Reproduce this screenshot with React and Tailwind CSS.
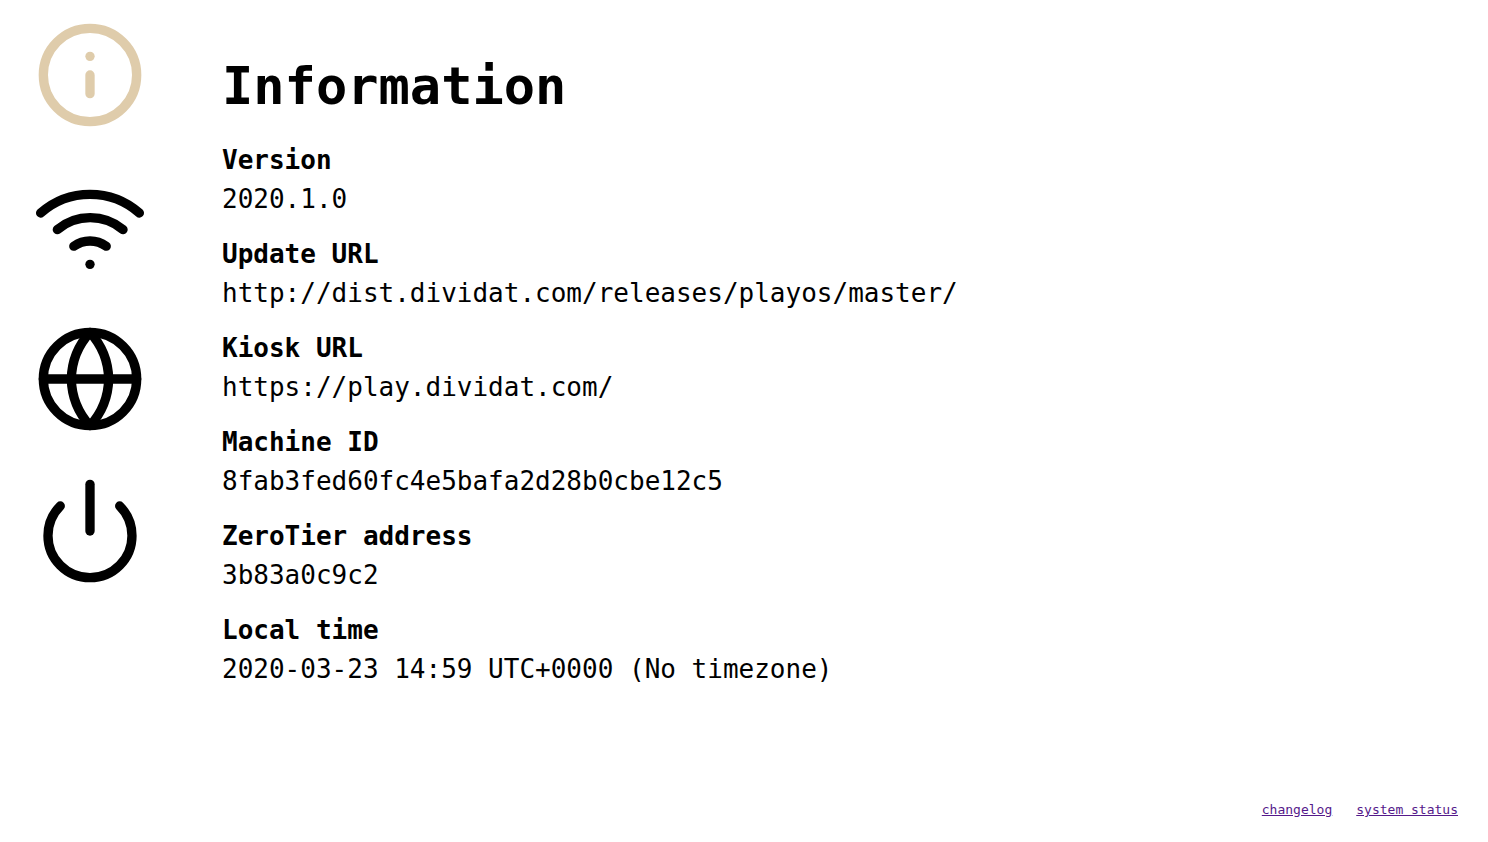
const base = {
  viewBox: "0 0 24 24",
  fill: "none",
  stroke: "currentColor",
  strokeWidth: 2,
  strokeLinecap: "round",
  strokeLinejoin: "round",
  "aria-hidden": true,
  className: "block w-28 h-28",
};

const nav = [
  {
    label: "Information",
    active: true,
    icon: (
      <svg {...base}>
        <circle cx="12" cy="12" r="10" />
        <line x1="12" y1="16" x2="12" y2="12" />
        <line x1="12" y1="8" x2="12" y2="8" />
      </svg>
    ),
  },
  {
    label: "Network",
    icon: (
      <svg {...base}>
        <path d="M5 12.55a11 11 0 0 1 14.08 0" />
        <path d="M1.42 9a16 16 0 0 1 21.16 0" />
        <path d="M8.53 16.11a6 6 0 0 1 6.95 0" />
        <line x1="12" y1="20" x2="12" y2="20" />
      </svg>
    ),
  },
  {
    label: "Localization",
    icon: (
      <svg {...base}>
        <circle cx="12" cy="12" r="10" />
        <line x1="2" y1="12" x2="22" y2="12" />
        <path d="M12 2a15.3 15.3 0 0 1 4 10 15.3 15.3 0 0 1-4 10 15.3 15.3 0 0 1-4-10 15.3 15.3 0 0 1 4-10z" />
      </svg>
    ),
  },
  {
    label: "Shutdown",
    icon: (
      <svg {...base}>
        <path d="M18.36 6.64a9 9 0 1 1-12.73 0" />
        <line x1="12" y1="2" x2="12" y2="12" />
      </svg>
    ),
  },
];

const facts = [
  ["Version", "2020.1.0"],
  ["Update URL", "http://dist.dividat.com/releases/playos/master/"],
  ["Kiosk URL", "https://play.dividat.com/"],
  ["Machine ID", "8fab3fed60fc4e5bafa2d28b0cbe12c5"],
  ["ZeroTier address", "3b83a0c9c2"],
  ["Local time", "2020-03-23 14:59 UTC+0000 (No timezone)"],
];

export default function App() {
  return (
    <div className="flex min-h-screen bg-white font-['DejaVu_Sans_Mono',monospace] text-[26px] leading-[39px] text-black">
      <nav className="flex w-[180px] shrink-0 flex-col items-center gap-10 pt-[19px]">
        {nav.map((item) => (
          <a
            key={item.label}
            href="#"
            aria-label={item.label}
            aria-current={item.active ? "page" : undefined}
            className={item.active ? "text-[#dfccab]" : "text-black"}
          >
            {item.icon}
          </a>
        ))}
      </nav>
      <div className="flex flex-1 flex-col justify-between pt-[47px] pr-[30px] pb-6 pl-[42px]">
        <main>
          <h1 className="mb-4 text-[52px] leading-[78px] font-bold">Information</h1>
          <dl className="flex flex-col gap-4">
            {facts.map(([term, value]) => (
              <div key={term}>
                <dt className="font-bold">{term}</dt>
                <dd>{value}</dd>
              </div>
            ))}
          </dl>
        </main>
        <footer className="flex justify-end gap-6 text-[13px] leading-4 text-[#551a8b]">
          <a href="#" className="underline">changelog</a>
          <a href="#" className="underline">system status</a>
        </footer>
      </div>
    </div>
  );
}
